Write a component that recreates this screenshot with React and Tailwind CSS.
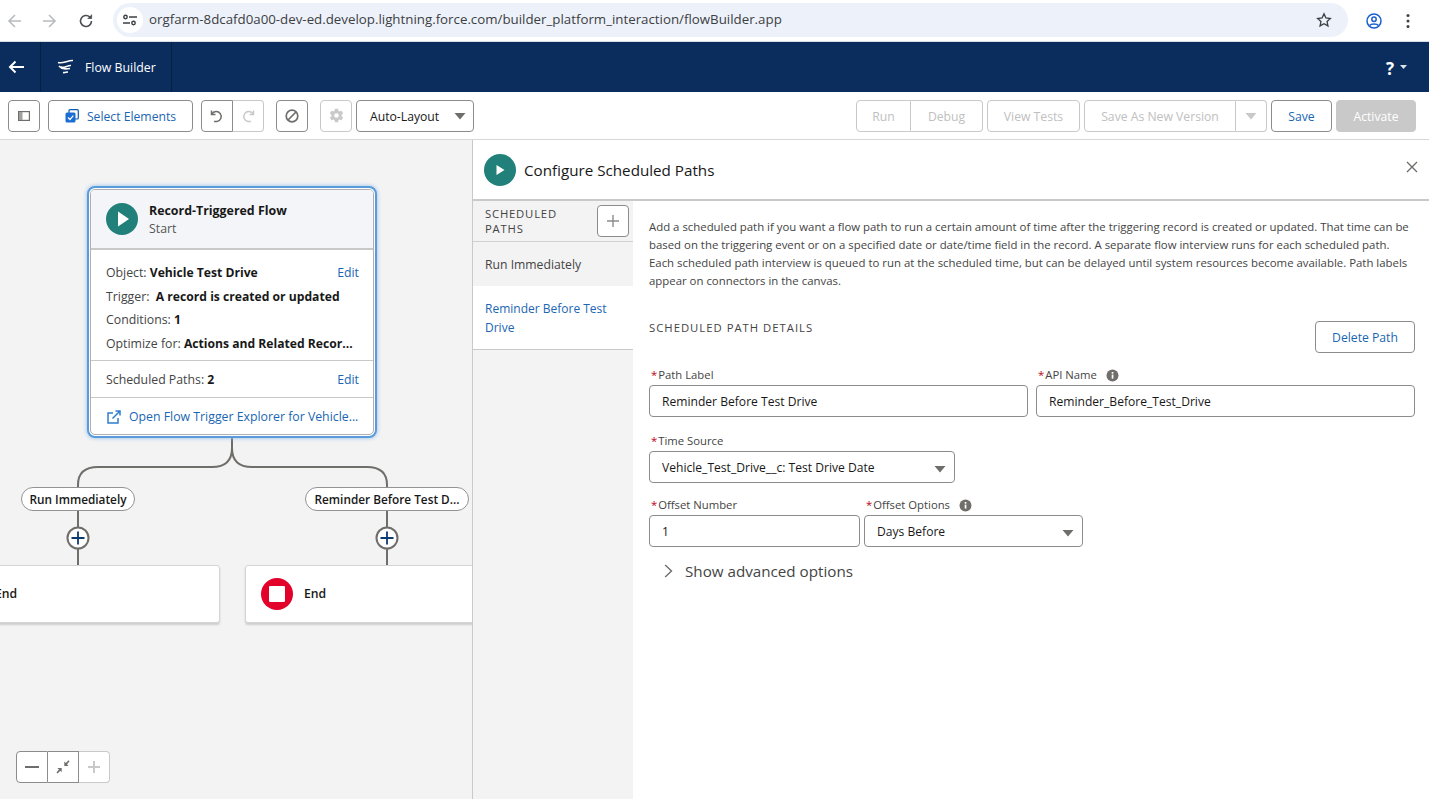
import React from "react";
import { IoSettingsSharp } from "react-icons/io5";

const font = { fontFamily: '"Open Sans", "Noto Sans", sans-serif' };

function Btn({ className = "", children }) {
  return <div className={"h-8 flex items-center justify-center pt-[4px] border rounded-[4px] bg-white text-[12.2px] " + className}>{children}</div>;
}

function Caret({ color = "#706e6b" }) {
  return <svg width="12" height="8" viewBox="0 0 12 8"><path d="M0.5 1h11L6 7.5z" fill={color} /></svg>;
}

function Info() {
  return <svg width="13" height="13" viewBox="0 0 13 13"><circle cx="6.5" cy="6.5" r="6" fill="#706e6b" /><rect x="5.7" y="5.6" width="1.7" height="4" fill="#fff" /><rect x="5.7" y="3" width="1.7" height="1.7" fill="#fff" /></svg>;
}

function Label({ children, info }) {
  return (
    <div className="flex items-center h-[20px] text-[11.3px] text-[#444444] pl-[2px]">
      <span className="text-[#ba0517] mr-[1px]">*</span>
      {children}
      {info && <span className="ml-[9px] flex"><Info /></span>}
    </div>
  );
}

function Field({ className = "", children, caret }) {
  return (
    <div className={"h-8 border border-[#8c8c8c] rounded-[4px] bg-white flex items-center justify-between pl-3 pr-[8px] text-[12.1px] text-[#181818] " + className}>
      <span className="pt-[2px]">{children}</span>
      {caret && <span className="flex mt-[3px]"><Caret /></span>}
    </div>
  );
}

function PlayIcon({ small }) {
  return (
    <svg width="32" height="32" viewBox="0 0 32 32" className="shrink-0">
      <circle cx="16" cy="16" r="16" fill="#22807a" />
      <path d={small ? "M12.5 11 L20.5 16 L12.5 21 Z" : "M12 8.5 L23 16 L12 23.5 Z"} fill="#fff" />
    </svg>
  );
}

function Bold({ children }) {
  return <b className="font-bold text-[12.15px] text-[#181818]">{children}</b>;
}

function Canvas() {
  return (
    <div className="relative w-[472px] shrink-0 bg-[#f3f3f3] overflow-hidden">
      <svg className="absolute left-0 top-0" width="472" height="659" fill="none">
        <path d="M232 298 V308 Q232 327 212 327 H98 Q78 327 78 345 V425" stroke="#706e6b" strokeWidth="2" />
        <path d="M232 298 V308 Q232 327 252 327 H367 Q387 327 387 345 V425" stroke="#706e6b" strokeWidth="2" />
      </svg>

      {/* start node */}
      <div className="absolute left-[87px] top-[46px] w-[290px] h-[252px] rounded-[8px] border-2 border-[#5b9bdc] bg-white p-[1px] shadow-[0_0_4px_#8fbcec]">
        <div className="h-full rounded-[5px] border border-[#b0b0b0] overflow-hidden text-[12.3px] text-[#444444]">
          <div className="h-[60px] bg-[#f3f5f8] border-b-2 border-[#c9c9c9] flex items-center pl-[15px] gap-[11px]">
            <PlayIcon />
            <div className="leading-[18px] pt-[1px]">
              <div className="font-bold text-[12.4px] text-[#181818]">Record-Triggered Flow</div>
              <div className="text-[#555555]">Start</div>
            </div>
          </div>
          <div className="h-[111px] border-b border-[#c9c9c9] pl-[15px] pr-[14px] pt-[11px] flex flex-col">
            <div className="h-[24px] flex items-center justify-between"><span>Object: <Bold>Vehicle Test Drive</Bold></span><span className="text-[#1a66b3]">Edit</span></div>
            <div className="h-[24px] flex items-center"><span>Trigger:&nbsp; <Bold>A record is created or updated</Bold></span></div>
            <div className="h-[23px] flex items-center"><span>Conditions: <Bold>1</Bold></span></div>
            <div className="h-[24px] flex items-center whitespace-nowrap"><span>Optimize for: <Bold>Actions and Related Recor...</Bold></span></div>
          </div>
          <div className="h-[37px] border-b border-[#c9c9c9] pt-[2px] pl-[15px] pr-[14px] flex items-center justify-between"><span>Scheduled Paths: <Bold>2</Bold></span><span className="text-[#1a66b3]">Edit</span></div>
          <div className="h-[36px] pt-[2px] pl-[16px] flex items-center gap-[8px] text-[#1a66b3] whitespace-nowrap">
            <svg width="14" height="14" viewBox="0 0 14 14" fill="none" stroke="#2e7dd1" strokeWidth="1.5"><path d="M6 3H1v10h10V8" /><path d="M5.5 8.5 13 1M8.5 1H13V5.5" /></svg>
            Open Flow Trigger Explorer for Vehicle...
          </div>
        </div>
      </div>

      {/* labels */}
      <div className="absolute left-[21px] top-[347px] w-[114px] h-[24px] pt-[1px] rounded-full border border-[#939393] bg-white flex items-center justify-center text-[11.8px] font-semibold text-[#181818] whitespace-nowrap">Run Immediately</div>
      <div className="absolute left-[305px] top-[347px] w-[164px] h-[24px] pt-[1px] rounded-full border border-[#939393] bg-white flex items-center justify-center text-[11.8px] font-semibold text-[#181818] whitespace-nowrap">Reminder Before Test D...</div>

      {/* plus */}
      {[66, 375].map((x) => (
        <div key={x} className="absolute top-[386px]" style={{ left: x }}>
          <svg width="24" height="24" viewBox="0 0 24 24"><circle cx="12" cy="12" r="10.5" fill="#fff" stroke="#706e6b" strokeWidth="2" /><path d="M12 5.5v13M5.5 12h13" stroke="#0a3a70" strokeWidth="1.8" /></svg>
        </div>
      ))}

      {/* end nodes */}
      <div className="absolute left-[-65px] top-[425px] w-[285px] h-[58px] bg-white rounded-[3px] border border-[#d4d4d4] shadow-[0_2px_2px_rgba(0,0,0,0.15)] flex items-center pl-[59px] text-[12.2px] font-semibold text-[#181818]">
        End
      </div>
      <div className="absolute left-[245px] top-[425px] w-[240px] h-[58px] bg-white rounded-[3px] border border-[#d4d4d4] shadow-[0_2px_2px_rgba(0,0,0,0.15)] flex items-center pl-[15px] gap-[11px] text-[12.2px] font-semibold text-[#181818]">
        <svg width="32" height="32" viewBox="0 0 32 32"><circle cx="16" cy="16" r="16" fill="#e3002b" /><rect x="8" y="8" width="16" height="16" rx="1" fill="#fff" /></svg>
        End
      </div>

      {/* zoom */}
      <div className="absolute left-[16px] top-[611px] flex h-8 w-[94px]">
        <div className="w-[32px] border border-[#8c8c8c] rounded-l-[4px] bg-white flex items-center justify-center">
          <svg width="14" height="14" viewBox="0 0 14 14"><path d="M0 7h14" stroke="#706e6b" strokeWidth="2" /></svg>
        </div>
        <div className="w-[31px] border-y border-r border-[#8c8c8c] bg-white flex items-center justify-center">
          <svg width="14" height="14" viewBox="0 0 14 14" fill="#706e6b"><path d="M13.5 1.2 12.6.3 9.8 3 8.3 1.6V6h4.4L11 4.4zM.5 12.6l1 1 2.8-2.8L5.7 12.3V7.9H1.4L3 9.4z" /></svg>
        </div>
        <div className="w-[31px] border-y border-r border-[#c9c9c9] rounded-r-[4px] bg-white flex items-center justify-center">
          <svg width="14" height="14" viewBox="0 0 14 14"><path d="M7 1v12M1 7h12" stroke="#c9c9c9" strokeWidth="2" /></svg>
        </div>
      </div>
    </div>
  );
}

function Panel() {
  return (
    <div className="flex-1 min-w-0 border-l border-[#c9c9c9] bg-white flex flex-col">
      <div className="h-[61px] shrink-0 border-b-2 border-[#c9c9c9] flex items-center pl-[11px] pr-[11px] gap-[8px]">
        <PlayIcon small />
        <div className="text-[15.2px] text-[#181818] flex-1 pt-[2px]">Configure Scheduled Paths</div>
        <svg className="mt-[-6px]" width="12" height="12" viewBox="0 0 12 12"><path d="M1 1l10 10M11 1 1 11" stroke="#706e6b" strokeWidth="1.4" /></svg>
      </div>
      <div className="flex flex-1 min-h-0">
        <div className="w-[160px] shrink-0 bg-[#f3f3f3] flex flex-col">
          <div className="h-[41px] border-b border-[#d0d0d0] flex items-center justify-between pl-[12px] pr-[4px]">
            <div className="text-[11.3px] leading-[15px] tracking-[0.8px] text-[#444444]">SCHEDULED<br />PATHS</div>
            <div className="w-8 h-8 border border-[#8c8c8c] rounded-[4px] bg-white flex items-center justify-center">
              <svg width="14" height="14" viewBox="0 0 14 14"><path d="M7 1v12M1 7h12" stroke="#8c8c8c" strokeWidth="1.4" /></svg>
            </div>
          </div>
          <div className="h-[44px] flex items-center pt-[3px] pl-[12px] text-[12.2px] text-[#444444]">Run Immediately</div>
          <div className="h-[64px] bg-white border-b border-[#c9c9c9] flex items-center pl-[12px] text-[12px] leading-[19px] text-[#1a66b3]">Reminder Before Test<br />Drive</div>
        </div>
        <div className="flex-1 min-w-0 pl-[16px] pr-[14px] flex flex-col">
          <p className="mt-[17px] text-[11.4px] leading-[18px] text-[#444444] whitespace-nowrap">
            Add a scheduled path if you want a flow path to run a certain amount of time after the triggering record is created or updated. That time can be<br />
            based on the triggering event or on a specified date or date/time field in the record. A separate flow interview runs for each scheduled path.<br />
            Each scheduled path interview is queued to run at the scheduled time, but can be delayed until system resources become available. Path labels<br />
            appear on connectors in the canvas.
          </p>
          <div className="mt-[31px] flex justify-between items-start">
            <div className="text-[11.3px] leading-[14px] tracking-[1px] text-[#444444]">SCHEDULED PATH DETAILS</div>
            <Btn className="w-[100px] border-[#8c8c8c] text-[#1a66b3] !pt-[2px]">Delete Path</Btn>
          </div>
          <div className="mt-[12px] flex gap-[8px]">
            <div className="flex-1">
              <Label>Path Label</Label>
              <Field>Reminder Before Test Drive</Field>
            </div>
            <div className="flex-1">
              <Label info>API Name</Label>
              <Field>Reminder_Before_Test_Drive</Field>
            </div>
          </div>
          <div className="mt-[14px] w-[306px]">
            <Label>Time Source</Label>
            <Field caret>Vehicle_Test_Drive__c: Test Drive Date</Field>
          </div>
          <div className="mt-[12px] flex gap-[4px]">
            <div className="w-[211px]">
              <Label>Offset Number</Label>
              <Field>1</Field>
            </div>
            <div className="w-[219px]">
              <Label info>Offset Options</Label>
              <Field caret>Days Before</Field>
            </div>
          </div>
          <div className="mt-[14px] ml-[15px] flex items-center gap-[12px] h-[20px] text-[15.2px] text-[#444444]">
            <svg width="9" height="14" viewBox="0 0 9 14" fill="none"><path d="M1.2 1 7.5 7l-6.3 6" stroke="#706e6b" strokeWidth="1.4" /></svg>
            Show advanced options
          </div>
        </div>
      </div>
    </div>
  );
}

export default function App() {
  return (
    <div className="w-[1429px] h-[799px] overflow-hidden flex flex-col bg-white" style={font}>
      {/* browser chrome */}
      <div className="h-[42px] shrink-0 border-b border-[#d8dde3] flex items-center bg-white">
        <svg className="ml-[7px]" width="16" height="16" viewBox="0 0 16 16" fill="none" stroke="#b8bbbf" strokeWidth="1.6"><path d="M14 8H2M8 2 2 8l6 6" /></svg>
        <svg className="ml-[18px]" width="16" height="16" viewBox="0 0 16 16" fill="none" stroke="#b8bbbf" strokeWidth="1.6"><path d="M2 8h12M8 2l6 6-6 6" /></svg>
        <svg className="ml-[21px]" width="16" height="16" viewBox="0 0 16 16" fill="none" stroke="#4a4d51" strokeWidth="1.6"><path d="M13.5 8A5.5 5.5 0 1 1 11.8 4" /><path d="M13.6 1.5v4h-4" fill="#4a4d51" strokeWidth="0.8" /></svg>
        <div className="ml-[19px] w-[1235px] h-[34px] mb-[1px] rounded-full bg-[#edf2fa] flex items-center pl-[4px]">
          <div className="w-[26px] h-[26px] rounded-full bg-white flex items-center justify-center">
            <svg width="14" height="12" viewBox="0 0 14 12" fill="none" stroke="#3c4043" strokeWidth="1.4"><circle cx="2.5" cy="3" r="1.7" /><path d="M6 3h8M0 9h7" /><circle cx="10.5" cy="9" r="1.7" /></svg>
          </div>
          <div className="ml-[6px] text-[13.3px] text-[#3c4043] flex-1 whitespace-nowrap">orgfarm-8dcafd0a00-dev-ed.develop.lightning.force.com/builder_platform_interaction/flowBuilder.app</div>
          <svg className="mr-[16px]" width="16" height="16" viewBox="0 0 24 24" fill="none" stroke="#3c4043" strokeWidth="2"><path d="M12 2.8l2.9 6.1 6.6.8-4.9 4.6 1.3 6.6-5.9-3.3-5.9 3.3 1.3-6.6L2.5 9.7l6.6-.8z" /></svg>
        </div>
        <svg className="ml-[18px]" width="16" height="16" viewBox="0 0 16 16" fill="none" stroke="#1a5fd0" strokeWidth="1.5"><circle cx="8" cy="8" r="7" /><circle cx="8" cy="6.3" r="2.2" /><path d="M3.5 12.5c1.5-2 7.5-2 9 0" /></svg>
        <svg className="ml-[24px]" width="4" height="16" viewBox="0 0 4 16" fill="#3c4043"><circle cx="2" cy="2.5" r="1.5" /><circle cx="2" cy="8" r="1.5" /><circle cx="2" cy="13.5" r="1.5" /></svg>
      </div>

      {/* nav */}
      <div className="h-[50px] shrink-0 bg-[#0a2d5e] flex items-stretch text-white">
        <div className="w-[41px] border-r border-[#06203f] flex items-center pl-[8px]">
          <svg width="16" height="14" viewBox="0 0 16 14" fill="none" stroke="#fff" strokeWidth="2"><path d="M16 7H2M7.5 1.5 2 7l5.5 5.5" /></svg>
        </div>
        <div className="w-[131px] border-r border-[#06203f] flex items-center pl-[16px] gap-[11px] text-[12.3px]">
          <svg width="17" height="16" viewBox="0 0 17 16" fill="none" stroke="#fff" strokeWidth="1.6"><path d="M1 3.5C6 5 11 1 16 1.5M4 8c3 1.5 7-2 10-1.5M2 7c3 3.5 7 3 11 2.5M6 13.5c2 .5 3-.5 5-.5" /></svg>
          <span className="pt-[2px]">Flow Builder</span>
        </div>
        <div className="flex-1 flex items-center justify-end pr-[22px] gap-[6px]">
          <span className="text-[17px] font-bold pt-[3px]">?</span>
          <svg width="7" height="4" viewBox="0 0 7 4"><path d="M0 0h7L3.5 4z" fill="#dfe3e8" /></svg>
        </div>
      </div>

      {/* toolbar */}
      <div className="h-[48px] shrink-0 border-b border-[#d8d8d8] flex items-center justify-between pl-2 pr-[13px]">
        <div className="flex items-center">
          <Btn className="w-8 border-[#8c8c8c] !pt-0">
            <svg width="12" height="10" viewBox="0 0 12 10" fill="none"><rect x="0.6" y="0.6" width="10.8" height="8.8" stroke="#706e6b" strokeWidth="1.2" /><rect x="1" y="1" width="3.5" height="8" fill="#a0a0a0" /></svg>
          </Btn>
          <Btn className="ml-2 w-[145px] border-[#8c8c8c] text-[#1a66b3] gap-[8px]">
            <svg className="mb-[3px]" width="14" height="14" viewBox="0 0 14 14"><rect x="4" y="0.7" width="9.3" height="9.3" rx="1" fill="none" stroke="#0b5cab" strokeWidth="1.2" /><rect x="0.5" y="3.5" width="10" height="10" rx="1.5" fill="#1b6ed1" /><path d="M3 8.5l2 2 3.3-3.8" fill="none" stroke="#fff" strokeWidth="1.2" /></svg>
            Select Elements
          </Btn>
          <div className="ml-2 flex">
            <Btn className="w-8 rounded-r-none border-[#8c8c8c] !pt-0">
              <svg width="14" height="14" viewBox="0 0 14 14" fill="none" stroke="#706e6b" strokeWidth="1.5"><path d="M1.5 1.5v4h4" /><path d="M1.8 5.2A5 5 0 1 1 7 12.5H4" /></svg>
            </Btn>
            <Btn className="w-[31px] rounded-l-none border-l-0 border-[#c9c9c9] !pt-0">
              <svg width="14" height="14" viewBox="0 0 14 14" fill="none" stroke="#c9c9c9" strokeWidth="1.5"><path d="M12.5 1.5v4h-4" /><path d="M12.2 5.2A5 5 0 1 0 7 12.5h3" /></svg>
            </Btn>
          </div>
          <Btn className="ml-3 w-8 border-[#8c8c8c] !pt-0">
            <svg width="14" height="14" viewBox="0 0 14 14" fill="none" stroke="#706e6b" strokeWidth="1.7"><circle cx="7" cy="7" r="5.8" /><path d="M3 11 11 3" /></svg>
          </Btn>
          <Btn className="ml-3 w-8 border-[#c9c9c9] !pt-0">
            <IoSettingsSharp size={15} color="#c9c9c9" />
          </Btn>
          <Btn className="ml-1 w-[118px] border-[#8c8c8c] text-[#181818] pl-[13px] pr-[7px]">
            <span className="flex-1">Auto-Layout</span>
            <span className="flex mb-[4px]"><Caret /></span>
          </Btn>
        </div>
        <div className="flex items-center text-[#c0c0c0]">
          <Btn className="w-[55px] rounded-r-none border-[#c9c9c9]">Run</Btn>
          <Btn className="w-[72px] rounded-l-none border-l-0 border-[#c9c9c9]">Debug</Btn>
          <Btn className="ml-1 w-[93px] border-[#c9c9c9]">View Tests</Btn>
          <Btn className="ml-1 w-[152px] rounded-r-none border-[#c9c9c9]">Save As New Version</Btn>
          <Btn className="w-[31px] rounded-l-none border-l-0 border-[#c9c9c9] !pt-0"><Caret color="#c9c9c9" /></Btn>
          <Btn className="ml-1 w-[61px] border-[#8c8c8c] text-[#1a66b3]">Save</Btn>
          <Btn className="ml-1 w-[80px] border-[#c9c9c9] !bg-[#c9c9c9] text-white">Activate</Btn>
        </div>
      </div>

      <div className="flex flex-1 min-h-0">
        <Canvas />
        <Panel />
      </div>
    </div>
  );
}
